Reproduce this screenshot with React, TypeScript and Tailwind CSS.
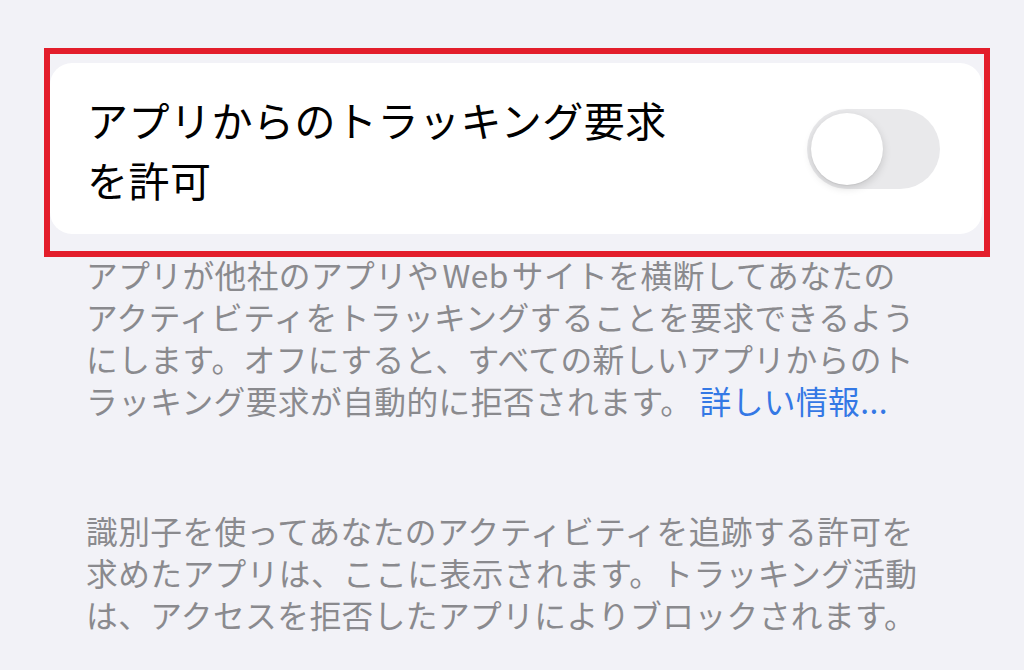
import React from "react";

const font = { fontFamily: '"Noto Sans CJK JP", "Noto Sans", sans-serif' };

function Toggle() {
  return (
    <div className="relative w-[133px] h-[80px] rounded-full bg-[#e9e9eb] shrink-0">
      <div className="absolute left-[4px] top-[4px] w-[72px] h-[72px] rounded-full bg-white shadow-[0_3px_8px_rgba(0,0,0,0.15),0_1px_1px_rgba(0,0,0,0.06)]" />
    </div>
  );
}

export default function App() {
  return (
    <div
      className="w-[1024px] h-[670px] bg-[#f2f2f7] overflow-hidden pt-[48px] pl-[44px]"
      style={font}
    >
      <div className="w-[946px] h-[209px] border-[6px] border-[#e31e2b] pt-[9px] pb-[17px] pr-[2px]">
        <div className="h-full bg-white rounded-[22px] flex items-center justify-between pl-[37px] pr-[42px]">
          <div className="text-[41px] leading-[60px] tracking-[0.5px] text-black whitespace-nowrap">
            <div>アプリからのトラッキング要求</div>
            <div>を許可</div>
          </div>
          <Toggle />
        </div>
      </div>

      <div className="mt-[-4px] pl-[42px] text-[31.7px] leading-[42px] tracking-[0.45px] text-[#8a8a8e] whitespace-nowrap">
        <div>
          アプリが他社のアプリや<span className="mx-[3px]">Web</span>サイトを横断してあなたの
        </div>
        <div>アクティビティをトラッキングすることを要求できるよう</div>
        <div>にします。オフにすると、すべての新しいアプリからのト</div>
        <div>
          ラッキング要求が自動的に拒否されます。
          <span className="ml-[7px] text-[#3478e5]">詳しい情報...</span>
        </div>
      </div>

      <div className="mt-[88px] pl-[42px] text-[31.7px] leading-[42px] tracking-[0.45px] text-[#8a8a8e] whitespace-nowrap">
        <div>識別子を使ってあなたのアクティビティを追跡する許可を</div>
        <div>求めたアプリは、ここに表示されます。トラッキング活動</div>
        <div>は、アクセスを拒否したアプリによりブロックされます。</div>
      </div>
    </div>
  );
}
